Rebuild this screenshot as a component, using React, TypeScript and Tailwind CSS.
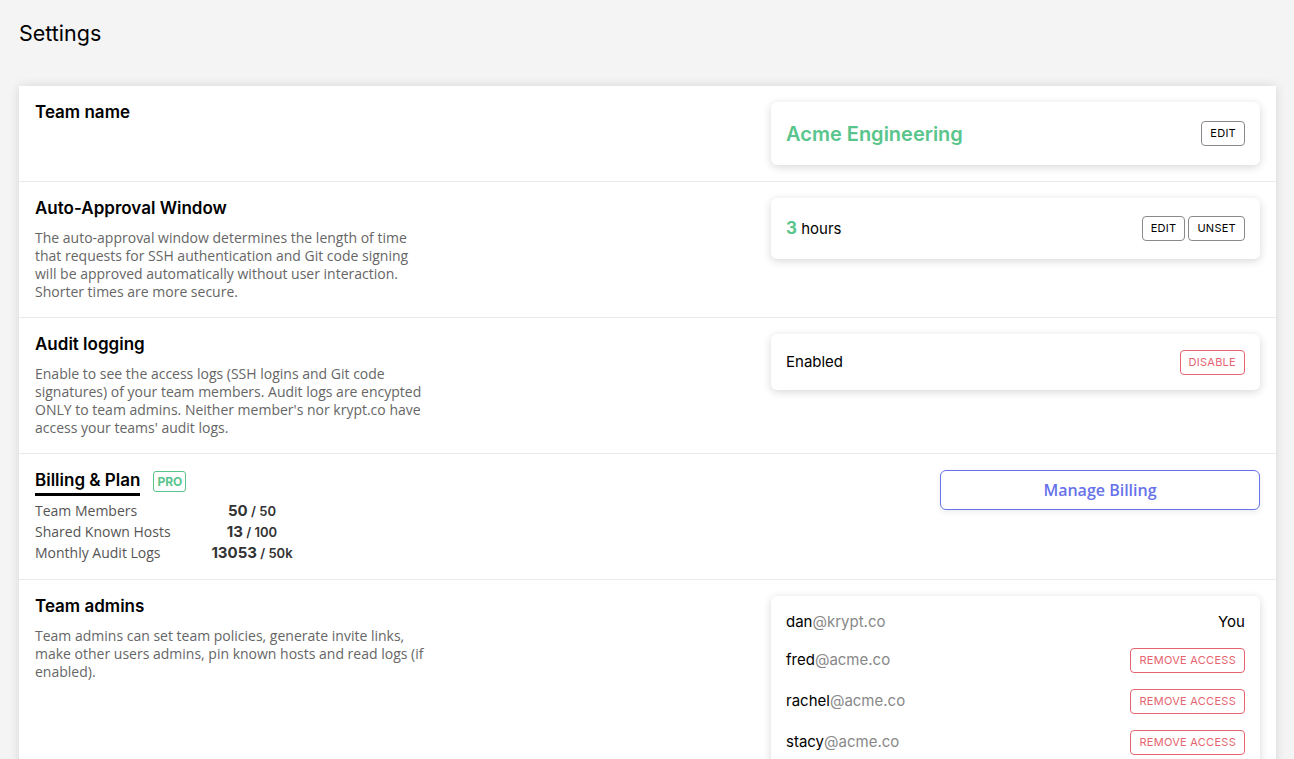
import React from 'react';

const head = "font-['Inter',sans-serif]";
const body = "font-['Open_Sans',sans-serif]";

const Row = ({ children, last }: { children: React.ReactNode; last?: boolean }) => (
    <div className={`flex justify-between px-4 py-4 ${last ? '' : 'border-b border-[#ebebeb]'}`}>
        {children}
    </div>
);

const Panel = ({ children, className = '' }: { children: React.ReactNode; className?: string }) => (
    <div className={`w-[489px] rounded-md bg-white px-[15px] shadow-[0_2px_8px_rgba(0,0,0,0.16)] ${className}`}>
        {children}
    </div>
);

const OutlineButton = ({ label, red }: { label: string; red?: boolean }) => (
    <button
        className={`h-[25px] rounded-[4px] border px-2 text-[11px] tracking-wide ${head} ${
            red ? 'border-[#e5646f] text-[#e5646f]' : 'border-[#8a8a8a] text-black'
        }`}
    >
        {label}
    </button>
);

const Info = ({ title, text }: { title: string; text?: string }) => (
    <div className="w-[400px]">
        <h2 className={`text-[17px] leading-5 font-semibold text-black ${head}`}>{title}</h2>
        {text && <p className={`mt-[11px] w-[392px] text-[14px] leading-[18px] text-[#666] ${body}`}>{text}</p>}
    </div>
);

const stats = [
    { label: 'Team Members', used: '50', total: '50' },
    { label: 'Shared Known Hosts', used: '13', total: '100' },
    { label: 'Monthly Audit Logs', used: '13053', total: '50k' },
];

const admins = [
    { user: 'fred', domain: '@acme.co' },
    { user: 'rachel', domain: '@acme.co' },
    { user: 'stacy', domain: '@acme.co' },
];

export default function App() {
    return (
        <div className="min-h-screen bg-[#f4f4f4] px-[19px] pb-10 pr-[18px]">
            <h1 className={`pt-[21px] text-[21.5px] leading-6 text-black ${head}`}>Settings</h1>

            <div className="mt-[41px] bg-white shadow-[0_0_10px_rgba(0,0,0,0.12)]">
                <Row>
                    <Info title="Team name" />
                    <Panel className="flex h-[63px] items-center justify-between">
                        <span className={`text-[20px] font-semibold text-[#59c58c] ${head}`}>Acme Engineering</span>
                        <OutlineButton label="EDIT" />
                    </Panel>
                </Row>

                <Row>
                    <Info
                        title="Auto-Approval Window"
                        text="The auto-approval window determines the length of time that requests for SSH authentication and Git code signing will be approved automatically without user interaction. Shorter times are more secure."
                    />
                    <Panel className="flex h-[61px] items-center justify-between">
                        <span className={`text-[15px] text-black ${head}`}>
                            <span className="text-[17px] font-bold text-[#59c58c]">3</span> hours
                        </span>
                        <div className="flex gap-[3px]">
                            <OutlineButton label="EDIT" />
                            <OutlineButton label="UNSET" />
                        </div>
                    </Panel>
                </Row>

                <Row>
                    <Info
                        title="Audit logging"
                        text="Enable to see the access logs (SSH logins and Git code signatures) of your team members. Audit logs are encypted ONLY to team admins. Neither member's nor krypt.co have access your teams' audit logs."
                    />
                    <Panel className="flex h-[56px] items-center justify-between">
                        <span className={`text-[15px] text-black ${head}`}>Enabled</span>
                        <OutlineButton label="DISABLE" red />
                    </Panel>
                </Row>

                <Row>
                    <div className="w-[400px]">
                        <div className="flex items-start gap-[13px]">
                            <h2 className={`border-b-[3px] border-black pb-[3px] text-[17px] leading-5 font-semibold text-black ${head}`}>
                                Billing &amp; Plan
                            </h2>
                            <span className={`mt-[1px] rounded-[3px] border border-[#59c58c] px-[3px] text-[12px] leading-[19px] font-bold text-[#59c58c] ${head}`}>
                                PRO
                            </span>
                        </div>
                        <div className="mt-[4px]">
                            {stats.map((s) => (
                                <div key={s.label} className="flex h-[21px] items-center">
                                    <span className={`w-[172px] text-[14px] text-[#555] ${body}`}>{s.label}</span>
                                    <span className={`w-[90px] text-center text-[#333] ${head}`}>
                                        <span className="text-[15px] font-bold">{s.used}</span>
                                        <span className="text-[13px] font-semibold"> / {s.total}</span>
                                    </span>
                                </div>
                            ))}
                        </div>
                    </div>
                    <button
                        className={`h-[40px] w-[320px] rounded-md border border-[#6672ea] bg-white text-[16px] font-semibold text-[#6672ea] shadow-[0_2px_6px_rgba(0,0,0,0.08)] ${body}`}
                    >
                        Manage Billing
                    </button>
                </Row>

                <Row last>
                    <Info
                        title="Team admins"
                        text="Team admins can set team policies, generate invite links, make other users admins, pin known hosts and read logs (if enabled)."
                    />
                    <Panel className="pt-[15px] pb-4">
                        <div className={`mb-[15px] flex h-[22px] items-center justify-between text-[15px] ${head}`}>
                            <span>
                                <span className="text-black">dan</span>
                                <span className="text-[#888]">@krypt.co</span>
                            </span>
                            <span className="text-black">You</span>
                        </div>
                        <div className="flex flex-col gap-4">
                            {admins.map((a) => (
                                <div key={a.user} className={`flex h-[25px] items-center justify-between text-[15px] ${head}`}>
                                    <span>
                                        <span className="text-black">{a.user}</span>
                                        <span className="text-[#888]">{a.domain}</span>
                                    </span>
                                    <OutlineButton label="REMOVE ACCESS" red />
                                </div>
                            ))}
                        </div>
                    </Panel>
                </Row>
            </div>
        </div>
    );
}
